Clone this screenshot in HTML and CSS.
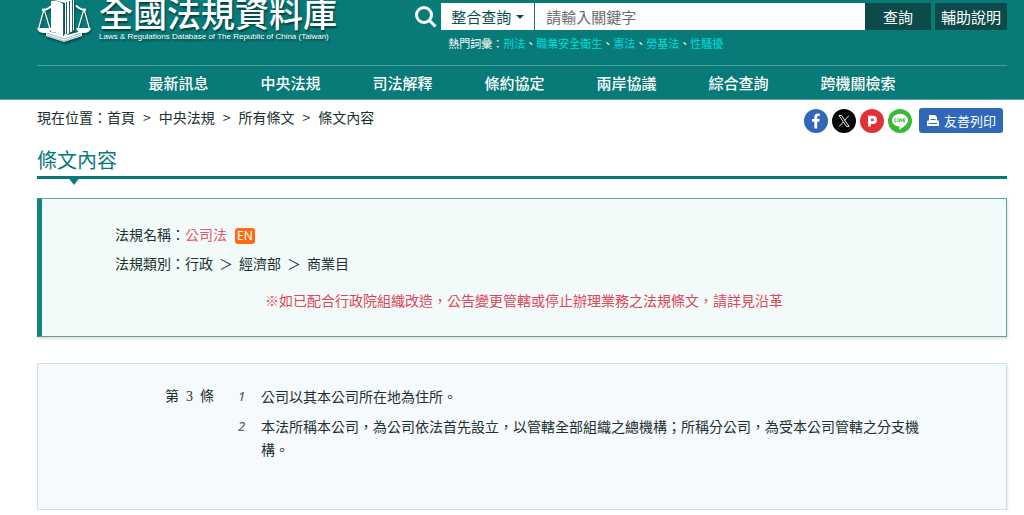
FILE: index.html
```html
<!DOCTYPE html>
<html lang="zh-Hant">
  <head>
    <meta charset="utf-8" />
    <title>公司法 - 條文內容 - 全國法規資料庫</title>
    <link rel="stylesheet" href="styles.css" />
  </head>
  <body>
    <header class="header">
      <div class="header-top">
        <a href="#" class="logo">
          <svg class="logo-icon" viewBox="0 0 54 44" aria-hidden="true">
            <!-- base -->
            <path d="M9 31v5l18 6 18-6v-5l-15 4z" fill="#fff" />
            <path d="M10 33l17 6 17-6M10 35l17 6 17-6" fill="none" stroke="#6f9f9d" stroke-width=".7" />
            <!-- scales -->
            <g fill="none" stroke="#fff" stroke-width="1.200">
              <path d="M7 9L1.500 29M7 9l6 20M47 9l-6 20M47 9l5.500 20" />
              <path d="M5 9.500q5 1 10-4M49 9.500q-5 1-10-4" stroke-width="2" />
            </g>
            <path d="M0 28h15q-1 5-7.500 5T0 28zM39 28h15q-1 5-7.500 5T39 28z" fill="#fff" />
            <!-- books -->
            <path d="M14 1q7-1 12 3v33q-5-5-12-5z" fill="#fff" />
            <path d="M17 0h20v30l-9 6V3z" fill="#fff" />
            <path d="M26.500 4v32M29.500 2v32M32.500 1v32M35.500 0v31" stroke="#285f60" />
          </svg>
          <span class="logo-text">
            <span class="logo-title">全國法規資料庫</span>
            <span class="logo-sub">Laws &amp; Regulations Database of The Republic of China (Taiwan)</span>
          </span>
        </a>

        <div class="search">
          <form class="search-form">
            <svg class="search-icon" viewBox="0 0 22 22" aria-hidden="true">
              <circle cx="9" cy="9" r="7.500" />
              <path d="M14.500 14.500l6 6" />
            </svg>
            <div class="select-box">
              <select aria-label="查詢類別">
                <option>整合查詢</option>
              </select>
            </div>
            <input type="text" class="search-input" placeholder="請輸入關鍵字" aria-label="關鍵字" />
            <button type="submit" class="search-btn">查詢</button>
            <a href="#" class="help-btn">輔助說明</a>
          </form>
          <p class="hot-words">
            熱門詞彙：<a href="#">刑法</a>、<a href="#">職業安全衛生</a>、<a href="#">憲法</a>、<a href="#">勞基法</a>、<a href="#">性騷擾</a>
          </p>
        </div>
      </div>

      <nav class="nav">
        <a href="#">最新訊息</a>
        <a href="#">中央法規</a>
        <a href="#">司法解釋</a>
        <a href="#">條約協定</a>
        <a href="#">兩岸協議</a>
        <a href="#">綜合查詢</a>
        <a href="#">跨機關檢索</a>
      </nav>
    </header>

    <main class="content">
      <div class="toolbar">
        <div class="breadcrumb">
          <span>現在位置：<a href="#">首頁</a></span>
          <span>&gt;</span>
          <a href="#">中央法規</a>
          <span>&gt;</span>
          <a href="#">所有條文</a>
          <span>&gt;</span>
          <span>條文內容</span>
        </div>
        <div class="share">
          <a href="#" aria-label="Facebook">
            <svg viewBox="0 0 24 24">
              <circle cx="12" cy="12" r="12" fill="#3067b8" />
              <path d="M10.300 19.500v-6.700H8v-2.700h2.300V8.300c0-2.500 1.400-3.800 3.500-3.800h2v2.600h-1.300c-1 0-1.300.5-1.300 1.300v1.700h2.500l-.4 2.700h-2.100v6.700z" fill="#fff" />
            </svg>
          </a>
          <a href="#" aria-label="X">
            <svg viewBox="0 0 24 24">
              <circle cx="12" cy="12" r="12" fill="#050505" />
              <path d="M7 6.500h2.600l7.500 11h-2.600zM17 6.500l-4.500 5M11.300 13L7 17.500" fill="none" stroke="#e4efed" />
            </svg>
          </a>
          <a href="#" aria-label="Plurk">
            <svg viewBox="0 0 24 24">
              <circle cx="12" cy="12" r="12" fill="#e03237" />
              <path d="M9.500 17.500V8.300h3.200c3.700 0 3.700 5.200 0 5.200H9.500" fill="none" stroke="#fff" stroke-width="3" />
            </svg>
          </a>
          <a href="#" aria-label="LINE">
            <svg viewBox="0 0 24 24">
              <circle cx="12" cy="12" r="12" fill="#3cb835" />
              <path d="M12 5c4.600 0 8 2.700 8 6.200 0 3.300-3.600 6-8 9.300-.6.400-.9.100-.7-.6l.3-2.400C7.200 17.300 4 14.600 4 11.200 4 7.700 7.400 5 12 5z" fill="#fff" />
              <path d="M7 9.300v3.400h1.600M10 9.300v3.900M11.800 13.200V9.800l2 2.900V9.300M17.200 9.800h-1.700v2.900h1.700M15.500 11.300h1.500" fill="none" stroke="#3cb835" />
            </svg>
          </a>
          <button type="button" class="print-btn">
            <svg viewBox="0 0 14 14" aria-hidden="true">
              <path d="M3 1h6l2 2v4H3z" />
              <path d="M1 7.500q0-1 1-1h10q1 0 1 1V12H1z" />
              <path d="M4.500 5.500h5" stroke="#3067b8" />
              <path d="M3 9.500h8" stroke="#3067b8" />
            </svg>
            友善列印
          </button>
        </div>
      </div>

      <h1 class="page-title">條文內容</h1>

      <section class="law-info">
        <p>法規名稱：<a href="#" class="law-name">公司法</a><a href="#" class="en-badge">EN</a></p>
        <p>法規類別：行政<span class="sep">＞</span>經濟部<span class="sep">＞</span>商業目</p>
        <p class="notice">※如已配合行政院組織改造，公告變更管轄或停止辦理業務之法規條文，請詳見沿革</p>
      </section>

      <section class="article">
        <h2 class="article-no"><span>第</span><span>3</span><span>條</span></h2>
        <ol class="article-text">
          <li>公司以其本公司所在地為住所。</li>
          <li>本法所稱本公司，為公司依法首先設立，以管轄全部組織之總機構；所稱分公司，為受本公司管轄之分支機構。</li>
        </ol>
      </section>
    </main>
  </body>
</html>
```

FILE: styles.css
```css
* {
  margin: 0;
  padding: 0;
  box-sizing: border-box;
}

body {
  font-family: "Noto Sans CJK TC", sans-serif;
  font-size: 14px;
  line-height: 22px;
  color: #20302f;
  background: #fff;
}

a {
  color: inherit;
  text-decoration: none;
}

button,
input,
select {
  font-family: inherit;
  font-size: 15px;
  border: none;
  border-radius: 0;
}

/* header */
.header {
  padding: 0 17px 0 37px;
  background: #087b79;
  color: #fff;
  border-bottom: 1px solid #5aa5a3;
}

.header-top {
  display: flex;
  justify-content: space-between;
  height: 66px;
  border-bottom: 1px solid #4a9f9c;
}

.logo {
  display: flex;
  gap: 8px;
}

.logo-icon {
  width: 54px;
  height: 44px;
  filter: drop-shadow(1px 2px 1px rgba(0, 0, 0, 0.4));
}

.logo-text {
  display: flex;
  flex-direction: column;
  gap: 4px;
  text-shadow: 1px 2px 2px rgba(0, 0, 0, 0.5);
}

.logo-title {
  font-size: 34px;
  font-weight: 500;
  line-height: 26px;
}

.logo-sub {
  font-family: "Liberation Sans", sans-serif;
  font-size: 8px;
  line-height: 14px;
}

.search {
  width: 61%;
  padding-top: 3px;
}

.search-form {
  display: flex;
  height: 27px;
}

.search-icon {
  width: 22px;
  height: 22px;
  margin: 3px 4px 0 0;
  fill: none;
  stroke: #fff;
  stroke-width: 3;
}

.select-box {
  position: relative;
  width: 93px;
  margin-right: 1px;
}

.select-box::after {
  content: "";
  position: absolute;
  top: 12px;
  right: 10px;
  border: 4px solid transparent;
  border-top-color: #0b4f4e;
  border-bottom: none;
  pointer-events: none;
}

.select-box select {
  width: 100%;
  height: 100%;
  padding-left: 10px;
  appearance: none;
  color: #0b4f4e;
  background: #fff;
}

.search-input {
  flex: 1;
  min-width: 0;
  padding: 0 11px;
  background: #fff;
}

.search-input::placeholder {
  color: #6c6c6c;
}

.search-btn,
.help-btn {
  width: 66px;
  font-size: 15px;
  line-height: 27px;
  text-align: center;
  color: #fff;
  background: #0c4b4a;
}

.help-btn {
  width: 72px;
  margin-left: 4px;
}

.hot-words {
  padding: 4px 0 0 33px;
  font-size: 11px;
  line-height: 18px;
}

.hot-words a {
  color: #00dbd9;
}

.nav {
  display: flex;
  justify-content: center;
  gap: 52px;
  font-size: 15px;
  font-weight: 500;
  line-height: 33px;
}

/* content */
.content {
  padding: 0 17px 0 37px;
}

.toolbar {
  display: flex;
  justify-content: space-between;
  padding: 8px 4px 0 0;
}

.breadcrumb {
  display: flex;
  gap: 8px;
  line-height: 18px;
}

.share {
  display: flex;
  align-items: center;
  gap: 4px;
}

.share svg {
  display: block;
  width: 24px;
  height: 24px;
}

.print-btn {
  display: flex;
  align-items: center;
  gap: 4px;
  height: 25px;
  margin-left: 3px;
  padding: 0 7px;
  font-size: 13px;
  color: #fff;
  background: #3067b8;
  border-radius: 3px;
}

.share .print-btn svg {
  width: 14px;
  height: 14px;
  fill: #fff;
}

.page-title {
  position: relative;
  padding: 12px 0 1px;
  font-size: 20px;
  font-weight: 400;
  line-height: 30px;
  color: #087b79;
  border-bottom: 3px solid #087b79;
}

.page-title::after {
  content: "";
  position: absolute;
  top: 100%;
  left: 30px;
  border: 7px solid transparent;
  border-top: 9px solid #087b79;
  border-bottom: none;
}

.law-info {
  margin-top: 19px;
  padding: 24px 73px 25px;
  background: #f2fbfa;
  border: 1px solid #5aa5a3;
  border-left: 5px solid #148581;
  box-shadow: 1px 2px 2px rgba(0, 0, 0, 0.12);
}

.law-info p {
  line-height: 22px;
  margin-bottom: 7px;
}

.law-name {
  color: #e05a68;
}

.en-badge {
  display: inline-block;
  margin-left: 8px;
  padding: 0 2px;
  font-family: "Noto Sans", sans-serif;
  font-size: 12px;
  line-height: 16px;
  color: #fff;
  background: #ff6a13;
  border-radius: 3px;
}

.sep {
  margin: 0 6px;
}

.law-info .notice {
  margin: 15px 0 0;
  text-align: center;
  color: #e04455;
}

.article {
  display: flex;
  gap: 24px;
  margin-top: 26px;
  padding: 21px 85px 41px 127px;
  background: #f7fafc;
  border: 1px solid #cfe2e0;
  box-shadow: 1px 2px 2px rgba(0, 60, 60, 0.12);
}

.article-no {
  display: flex;
  gap: 7px;
  font-family: "Liberation Serif", "Noto Sans CJK TC", serif;
  font-size: 14px;
  font-weight: 400;
  line-height: 23px;
}

.article-text {
  flex: 1;
  list-style: none;
  counter-reset: item;
}

.article-text li {
  display: flex;
  counter-increment: item;
  line-height: 23px;
  margin-bottom: 7px;
}

.article-text li::before {
  content: counter(item);
  flex: 0 0 23px;
  font-family: "Noto Sans", sans-serif;
  font-size: 13px;
  font-style: italic;
  font-weight: 500;
  color: #5c6766;
}
```
